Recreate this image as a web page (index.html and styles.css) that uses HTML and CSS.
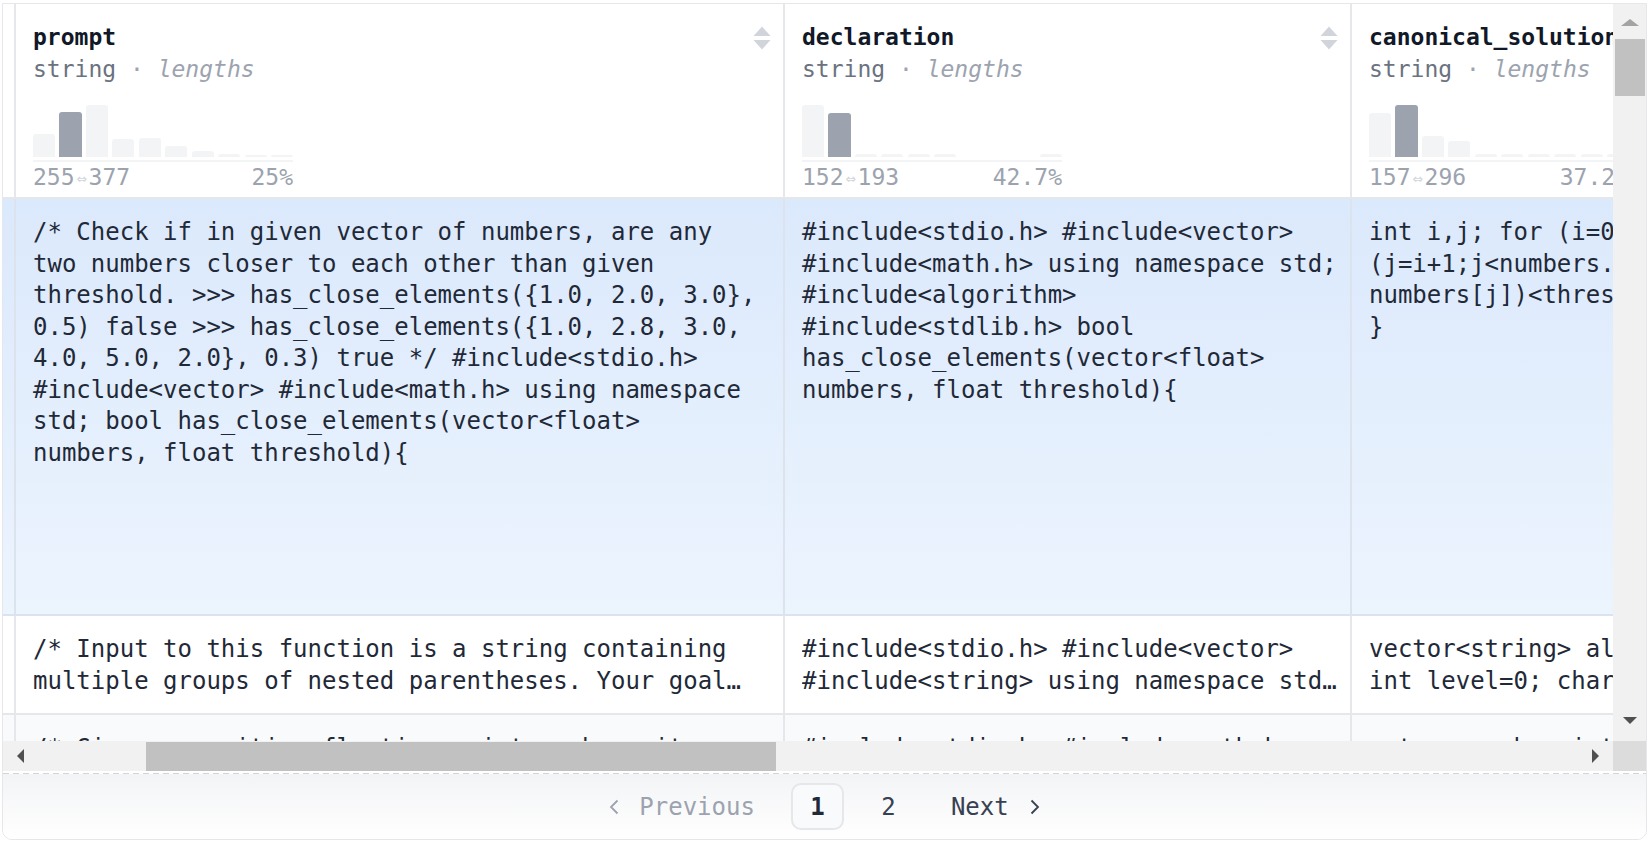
FILE: index.html
```html
<!DOCTYPE html>
<html lang="en">
<head>
<meta charset="utf-8">
<title>Dataset viewer</title>
<link rel="stylesheet" href="styles.css">
</head>
<body>
<div class="viewer">
  <div class="frame">
    <div class="viewport">
      <div class="table">
        <div class="row head">
          <div class="cell c0"></div>
          <div class="cell c1 head-cell">
            <div class="head-info">
              <div class="col-name">prompt</div>
              <div class="col-type"><span class="type">string</span> <span class="dot">·</span> <span class="kind">lengths</span></div>
              <div class="hist">
                <div class="bar" style="height:23px"></div>
                <div class="bar hi" style="height:45px"></div>
                <div class="bar" style="height:52px"></div>
                <div class="bar" style="height:18px"></div>
                <div class="bar" style="height:19px"></div>
                <div class="bar" style="height:11px"></div>
                <div class="bar" style="height:6px"></div>
                <div class="bar" style="height:3px"></div>
                <div class="bar" style="height:2px"></div>
                <div class="bar" style="height:2px"></div>
              </div>
              <div class="axis"></div>
              <div class="stats"><span>255<span class="arrow">⇔</span>377</span><span>25%</span></div>
            </div>
            <svg class="sort" width="18" height="24" viewBox="0 0 18 24"><path d="M9 0.5 L17.5 10 H0.5 Z" fill="#d1d5db"/><path d="M0.5 14 H17.5 L9 23.5 Z" fill="#d1d5db"/></svg>
          </div>
          <div class="cell c2 head-cell">
            <div class="head-info">
              <div class="col-name">declaration</div>
              <div class="col-type"><span class="type">string</span> <span class="dot">·</span> <span class="kind">lengths</span></div>
              <div class="hist">
                <div class="bar" style="height:52px"></div>
                <div class="bar hi" style="height:44px"></div>
                <div class="bar" style="height:3px"></div>
                <div class="bar" style="height:3px"></div>
                <div class="bar" style="height:3px"></div>
                <div class="bar" style="height:3px"></div>
                <div class="bar" style="height:0px"></div>
                <div class="bar" style="height:0px"></div>
                <div class="bar" style="height:0px"></div>
                <div class="bar" style="height:3px"></div>
              </div>
              <div class="axis"></div>
              <div class="stats"><span>152<span class="arrow">⇔</span>193</span><span>42.7%</span></div>
            </div>
            <svg class="sort" width="18" height="24" viewBox="0 0 18 24"><path d="M9 0.5 L17.5 10 H0.5 Z" fill="#d1d5db"/><path d="M0.5 14 H17.5 L9 23.5 Z" fill="#d1d5db"/></svg>
          </div>
          <div class="cell c3 head-cell">
            <div class="head-info">
              <div class="col-name">canonical_solution</div>
              <div class="col-type"><span class="type">string</span> <span class="dot">·</span> <span class="kind">lengths</span></div>
              <div class="hist">
                <div class="bar" style="height:44px"></div>
                <div class="bar hi" style="height:52px"></div>
                <div class="bar" style="height:21px"></div>
                <div class="bar" style="height:16px"></div>
                <div class="bar" style="height:3px"></div>
                <div class="bar" style="height:3px"></div>
                <div class="bar" style="height:3px"></div>
                <div class="bar" style="height:3px"></div>
                <div class="bar" style="height:3px"></div>
                <div class="bar" style="height:3px"></div>
              </div>
              <div class="axis"></div>
              <div class="stats"><span>157<span class="arrow">⇔</span>296</span><span>37.2%</span></div>
            </div>
            <svg class="sort" width="18" height="24" viewBox="0 0 18 24"><path d="M9 0.5 L17.5 10 H0.5 Z" fill="#d1d5db"/><path d="M0.5 14 H17.5 L9 23.5 Z" fill="#d1d5db"/></svg>
          </div>
        </div>

        <div class="row sel">
          <div class="cell c0"></div>
          <div class="cell c1 body-cell">/* Check if in given vector of numbers, are any two numbers closer to each other than given threshold. &gt;&gt;&gt; has_close_elements({1.0, 2.0, 3.0}, 0.5) false &gt;&gt;&gt; has_close_elements({1.0, 2.8, 3.0, 4.0, 5.0, 2.0}, 0.3) true */ #include&lt;stdio.h&gt; #include&lt;vector&gt; #include&lt;math.h&gt; using namespace std; bool has_close_elements(vector&lt;float&gt; numbers, float threshold){</div>
          <div class="cell c2 body-cell">#include&lt;stdio.h&gt; #include&lt;vector&gt; #include&lt;math.h&gt; using namespace std; #include&lt;algorithm&gt; #include&lt;stdlib.h&gt; bool has_close_elements(vector&lt;float&gt; numbers, float threshold){</div>
          <div class="cell c3 body-cell">int i,j; for (i=0;i&lt;numbers.size();i++) for (j=i+1;j&lt;numbers.size();j++) if (abs(numbers[i]-numbers[j])&lt;threshold) return true; return false; }</div>
        </div>

        <div class="row plain">
          <div class="cell c0"></div>
          <div class="cell c1 body-cell"><div class="clamp">/* Input to this function is a string containing multiple groups of nested parentheses. Your goal is to separate those</div></div>
          <div class="cell c2 body-cell"><div class="clamp">#include&lt;stdio.h&gt; #include&lt;vector&gt; #include&lt;string&gt; using namespace std; vector&lt;string&gt;</div></div>
          <div class="cell c3 body-cell"><div class="clamp">vector&lt;string&gt; all_parens; string current_paren; int level=0; char chr; int i;</div></div>
        </div>

        <div class="row alt">
          <div class="cell c0"></div>
          <div class="cell c1 body-cell"><div class="clamp one">/* Given a positive floating point number, it can</div></div>
          <div class="cell c2 body-cell"><div class="clamp one">#include&lt;stdio.h&gt; #include&lt;math.h&gt;</div></div>
          <div class="cell c3 body-cell"><div class="clamp one">return number-int(number); }</div></div>
        </div>
      </div>
    </div>

    <div class="vscroll">
      <svg class="arr-up" width="18" height="7" viewBox="0 0 18 7"><path d="M9 0 L18 7 H0 Z" fill="#a3a3a3"/></svg>
      <div class="vthumb"></div>
      <div class="spacer"></div>
      <svg class="arr-down" width="14" height="7" viewBox="0 0 14 7"><path d="M0 0 H14 L7 7 Z" fill="#505050"/></svg>
    </div>
    <div class="hscroll">
      <svg class="arr-left" width="7" height="14" viewBox="0 0 7 14"><path d="M7 0 V14 L0 7 Z" fill="#505050"/></svg>
      <div class="hthumb"></div>
      <div class="spacer"></div>
      <svg class="arr-right" width="7" height="14" viewBox="0 0 7 14"><path d="M0 0 L7 7 L0 14 Z" fill="#505050"/></svg>
    </div>
    <div class="corner"></div>
  </div>

  <div class="pager-rule"></div>
  <div class="pager">
    <a class="pg-link pg-prev"><svg class="chev-l" width="10" height="16" viewBox="0 0 10 16"><path d="M8.5 1.5 L2 8 L8.5 14.5" fill="none" stroke="currentColor" stroke-width="1.8"/></svg><span>Previous</span></a>
    <a class="pg-num active">1</a>
    <a class="pg-num">2</a>
    <a class="pg-link pg-next"><span>Next</span><svg class="chev-r" width="10" height="16" viewBox="0 0 10 16"><path d="M1.5 1.5 L8 8 L1.5 14.5" fill="none" stroke="currentColor" stroke-width="1.8"/></svg></a>
  </div>
</div>
</body>
</html>
```

FILE: styles.css
```css
* { box-sizing: border-box; }
html, body { margin: 0; padding: 0; background: #fff; }
body {
  font-family: "DejaVu Sans Mono", "Liberation Mono", monospace;
  color: #1f2937;
}

.viewer {
  margin: 3px 2px;
  height: 837px;
  border: 1px solid #e5e7eb;
  border-radius: 0 0 10px 10px;
  overflow: hidden;
  display: flex;
  flex-direction: column;
  background: #fff;
}

.frame {
  display: grid;
  grid-template-columns: 1fr 33px;
  grid-template-rows: 737px 30px;
}

.viewport { overflow: hidden; min-width: 0; }
.table { width: max-content; }

.row { display: flex; }
.cell { flex: none; border-right: 2px solid #e5e7eb; }
.c0 { width: 13px; }
.c1 { width: 769px; }
.c2 { width: 567px; }
.c3 { width: 754px; }

/* header */
.row.head {
  height: 195px;
  border-bottom: 2px solid #e5e7eb;
  background: #fff;
}
.head-cell {
  display: flex;
  justify-content: space-between;
  align-items: flex-start;
  padding: 18px 12px 0 17px;
  overflow: hidden;
}
.head-info { min-width: 0; }
.col-name {
  font-size: 23px;
  line-height: 31.5px;
  font-weight: bold;
  color: #111827;
  white-space: nowrap;
}
.col-type {
  font-size: 23px;
  line-height: 31.5px;
  white-space: nowrap;
  color: #9ca3af;
}
.col-type .type { color: #6b7280; }
.col-type .kind { font-style: italic; }

.hist {
  margin-top: 20px;
  width: 260px;
  height: 52px;
  display: flex;
  align-items: flex-end;
  gap: 4.3px;
}
.bar {
  flex: 1;
  background: #f3f4f6;
  border-radius: 3px 3px 0 0;
}
.bar.hi { background: #9ca3af; }
.axis {
  margin-top: 2.5px;
  width: 260px;
  height: 2px;
  background: #f3f4f6;
}
.stats {
  width: 260px;
  display: flex;
  justify-content: space-between;
  font-size: 23px;
  line-height: 31.5px;
  color: #9ca3af;
  white-space: nowrap;
}
.stats .arrow {
  display: inline-block;
  width: 14px;
  font-size: 17px;
  text-align: center;
  color: #d1d5db;
  vertical-align: 1px;
}
.sort { flex: none; margin-top: 3.5px; }

/* body rows */
.body-cell {
  font-size: 24px;
  line-height: 31.5px;
  padding-top: 18px;
  padding-left: 17px;
  color: #1f2937;
}
.body-cell.c1 { padding-right: 20px; }
.body-cell.c2 { padding-right: 6px; }
.body-cell.c3 { padding-right: 15px; }

.row.sel {
  height: 417px;
  border-bottom: 2px solid #dbe3f0;
  background: linear-gradient(to bottom, #dbe9fc, #ecf4fe);
}
.row.sel .cell { border-right-color: #dde3ec; }

.row.plain {
  height: 99px;
  border-bottom: 2px solid #e5e7eb;
  background: #fff;
}
.row.alt {
  height: 60px;
  background: #f9fafb;
}

.clamp {
  display: -webkit-box;
  -webkit-line-clamp: 2;
  -webkit-box-orient: vertical;
  overflow: hidden;
}
.clamp.one { -webkit-line-clamp: 1; }

/* scrollbars */
.vscroll {
  background: #f1f1f1;
  display: flex;
  flex-direction: column;
  align-items: center;
  padding-top: 15px;
  padding-bottom: 17px;
}
.vthumb {
  margin-top: 13px;
  width: 30px;
  height: 57px;
  margin-left: 1px;
  background: #c1c1c1;
}
.spacer { flex: 1; }

.hscroll {
  background: #f1f1f1;
  display: flex;
  align-items: center;
  padding-left: 14px;
  padding-right: 14px;
}
.hthumb {
  margin-left: 122px;
  width: 630px;
  height: 29px;
  margin-top: 1px;
  background: #c1c1c1;
}
.corner { background: #dcdcdc; }

/* pager */
.pager-rule {
  margin-top: 2px;
  height: 1px;
  flex: none;
  background: repeating-linear-gradient(90deg, #d1d5db 0 6px, transparent 6px 10px);
}
.pager {
  flex: 1;
  display: flex;
  justify-content: center;
  align-items: center;
  gap: 18px;
  font-size: 24px;
  line-height: 30px;
  background: linear-gradient(to bottom, #f3f4f6, #ffffff);
}
.pg-link {
  display: flex;
  align-items: center;
  height: 47px;
  padding: 0 18px;
  color: #374151;
}
.pg-prev { color: #9ca3af; }
.chev-l { margin-right: 20px; }
.chev-r { margin-left: 21px; }
.pg-num {
  width: 53px;
  height: 47px;
  display: flex;
  justify-content: center;
  align-items: center;
  border: 2px solid transparent;
  border-radius: 10px;
  color: #374151;
}
.pg-num.active {
  border-color: #e5e7eb;
  background: #f9fafb;
  font-weight: bold;
  color: #1f2937;
}
```
